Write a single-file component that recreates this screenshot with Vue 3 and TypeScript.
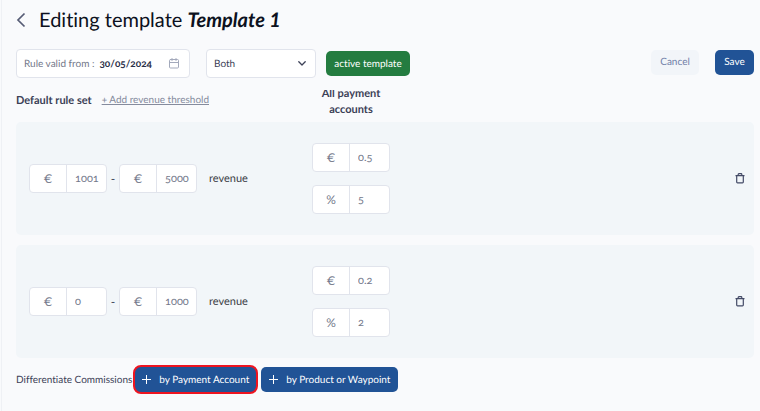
<script setup lang="ts">
import { ref } from 'vue'

interface Rule {
  id: number
  from: string
  to: string
  fixed: string
  percent: string
}

const validFrom = ref('30/05/2024')
const scope = ref('Both')
const rules = ref<Rule[]>([
  { id: 1, from: '1001', to: '5000', fixed: '0.5', percent: '5' },
  { id: 2, from: '0', to: '1000', fixed: '0.2', percent: '2' },
])

function removeRule(id: number) {
  rules.value = rules.value.filter((r) => r.id !== id)
}
</script>

<template>
  <main class="page">
    <header class="heading">
      <button class="icon-button back" type="button" aria-label="Back">
        <svg width="10" height="16" viewBox="0 0 10 16" fill="none" stroke="currentColor" stroke-width="1.7">
          <path d="M8.5 1.5 2 8l6.500 6.500" />
        </svg>
      </button>
      <h1>Editing template <em>Template 1</em></h1>
    </header>

    <div class="toolbar">
      <div class="date-field">
        <label for="valid-from">Rule valid from :</label>
        <input id="valid-from" v-model="validFrom" type="text" />
        <svg width="10" height="11" viewBox="0 0 10 11" fill="none" stroke="currentColor" stroke-linecap="round">
          <rect x="0.500" y="1.500" width="9" height="8.500" rx="1" />
          <path d="M.5 4.500h9M3 .5v2M7 .5v2" />
        </svg>
      </div>
      <div class="select-field">
        <select v-model="scope" aria-label="Applies to">
          <option>Both</option>
        </select>
        <svg width="8" height="5" viewBox="0 0 8 5" fill="none" stroke="currentColor" stroke-width="1.3" stroke-linecap="round" stroke-linejoin="round">
          <path d="M.8.8 4 4 7.200.8" />
        </svg>
      </div>
      <button class="button active" type="button">active template</button>
      <div class="actions">
        <button class="button cancel" type="button">Cancel</button>
        <button class="button save" type="button">Save</button>
      </div>
    </div>

    <div class="columns">
      <div class="rule-set">
        <h2>Default rule set</h2>
        <a href="#">+ Add revenue threshold</a>
      </div>
      <div class="accounts"><span>All payment accounts</span></div>
    </div>

    <section class="rules">
      <article v-for="rule in rules" :key="rule.id" class="rule">
        <div class="range">
          <label class="amount"><span>€</span><input v-model="rule.from" type="text" /></label>
          <span class="dash">-</span>
          <label class="amount"><span>€</span><input v-model="rule.to" type="text" /></label>
          <span class="unit">revenue</span>
        </div>
        <div class="commission">
          <label class="amount"><span>€</span><input v-model="rule.fixed" type="text" /></label>
          <label class="amount"><span>%</span><input v-model="rule.percent" type="text" /></label>
        </div>
        <button class="icon-button trash" type="button" aria-label="Delete rule" @click="removeRule(rule.id)">
          <svg width="10" height="11" viewBox="0 0 10 11" fill="none" stroke="currentColor" stroke-width="1.200">
            <path d="M.5 2.700h9M1.700 2.700v6.300q0 .8.8.8h5q.8 0 .8-.8V2.700M3.200 2.500V1.400q0-.7.7-.7h2.200q.7 0 .7.7v1.100" />
          </svg>
        </button>
      </article>
    </section>

    <footer class="differentiate">
      <span>Differentiate Commissions</span>
      <button class="button add marked" type="button">
        <svg width="9" height="9" viewBox="0 0 9 9" stroke="currentColor"><path d="M4.500 0v9M0 4.500h9" /></svg>
        by Payment Account
      </button>
      <button class="button add" type="button">
        <svg width="9" height="9" viewBox="0 0 9 9" stroke="currentColor"><path d="M4.500 0v9M0 4.500h9" /></svg>
        by Product or Waypoint
      </button>
    </footer>
  </main>
</template>

<style>
body {
  background: #f9fafc;
}
</style>

<style scoped>
.page {
  box-sizing: border-box;
  min-height: 100vh;
  margin-left: 1px;
  padding: 8px 6px 8px 14px;
  border-left: 1px solid #eff1f5;
  color: #3c4157;
  font-family: Lato, "Open Sans", sans-serif;
  font-size: 10px;
  font-variant-ligatures: none;
  font-variant-numeric: oldstyle-nums;
  text-rendering: geometricPrecision;
}
button,
input,
select {
  margin: 0;
  font: inherit;
  font-variant-ligatures: none;
  font-variant-numeric: oldstyle-nums;
  text-rendering: inherit;
  color: inherit;
}
svg {
  display: block;
  flex: none;
}
.heading {
  display: flex;
  align-items: center;
  gap: 13px;
  height: 24px;
}
h1 {
  margin: 0;
  color: #0c1120;
  font-size: 20px;
  font-weight: 400;
  line-height: 24px;
  font-variant-numeric: lining-nums;
}
h1 em {
  font-weight: 700;
}
.icon-button {
  display: flex;
  padding: 0;
  border: 0;
  background: none;
  cursor: pointer;
}
.back {
  color: #565c75;
}
.toolbar {
  display: flex;
  align-items: center;
  margin-top: 17px;
}
.date-field,
.select-field,
.amount {
  box-sizing: border-box;
  height: 29px;
  border: 1px solid #e1e4ec;
  border-radius: 4px;
  background: #fff;
}
.date-field {
  display: flex;
  align-items: center;
  width: 174px;
  padding: 0 10px 0 7px;
  color: #73788a;
}
.date-field input {
  flex: 1;
  min-width: 0;
  padding: 0 0 0 5px;
  border: 0;
  background: none;
  outline: 0;
  color: #2b3048;
  font-weight: 700;
}
.date-field svg {
  color: #a3a9bb;
}
.select-field {
  display: grid;
  align-items: center;
  width: 110px;
  margin: 0 10px 0 16px;
}
.select-field select,
.select-field svg {
  grid-area: 1 / 1;
}
.select-field select {
  width: 100%;
  height: 27px;
  padding: 0 7px;
  border: 0;
  background: none;
  appearance: none;
  outline: 0;
}
.select-field svg {
  justify-self: end;
  margin-right: 9px;
  pointer-events: none;
}
.button {
  box-sizing: border-box;
  height: 25px;
  padding: 0 8px;
  border: 0;
  border-radius: 5px;
  background: #215396;
  color: #fff;
  white-space: nowrap;
  cursor: pointer;
}
.active {
  width: 84px;
  background: #247c40;
}
.actions {
  display: flex;
  gap: 16px;
  margin: 0 0 3px auto;
}
.cancel {
  width: 48px;
  background: #f2f5f9;
  color: #7180a8;
}
.save {
  width: 39px;
}
.columns {
  display: flex;
  align-items: flex-end;
  height: 44px;
}
.rule-set {
  display: flex;
  align-items: center;
  gap: 10px;
  width: 296px;
  height: 28px;
  margin-bottom: 8px;
}
h2 {
  margin: 0;
  font-size: 11px;
  font-weight: 700;
}
.rule-set a {
  color: #858b9d;
  line-height: 14px;
}
.accounts {
  display: flex;
  align-items: flex-end;
  width: 78px;
  height: 28px;
  margin-bottom: 4px;
  overflow: hidden;
  font-size: 11px;
  font-weight: 700;
  line-height: 16px;
  text-align: center;
}
.rules {
  display: flex;
  flex-direction: column;
  gap: 10px;
}
.rule {
  display: flex;
  align-items: center;
  padding: 21px 9px 21px 13px;
  border-radius: 5px;
  background: #f2f6f9;
}
.range {
  display: flex;
  align-items: center;
  width: 283px;
}
.amount {
  display: flex;
  width: 78px;
  color: #73788a;
  font-size: 11px;
  line-height: 27px;
}
.amount span {
  box-sizing: border-box;
  width: 37px;
  border-right: 1px solid #e1e4ec;
  font-size: 12px;
  font-variant-numeric: lining-nums;
  text-align: center;
}
.amount input {
  flex: 1;
  min-width: 0;
  padding: 0 0 0 8px;
  border: 0;
  background: none;
  outline: 0;
}
.dash {
  width: 12px;
  font-size: 12px;
  text-align: center;
}
.unit {
  margin-left: 12px;
  color: #3a3d45;
  font-size: 11px;
}
.commission {
  display: flex;
  flex-direction: column;
  gap: 13px;
}
.trash {
  margin-left: auto;
  color: #434a66;
}
.differentiate {
  display: flex;
  align-items: center;
  margin-top: 7px;
}
.add {
  display: flex;
  align-items: center;
  gap: 8px;
  margin-left: 3px;
}
.marked {
  height: 29px;
  margin-left: 1px;
  padding: 0 7px;
  border: 2px solid #ee1420;
  border-radius: 8px;
}
</style>
